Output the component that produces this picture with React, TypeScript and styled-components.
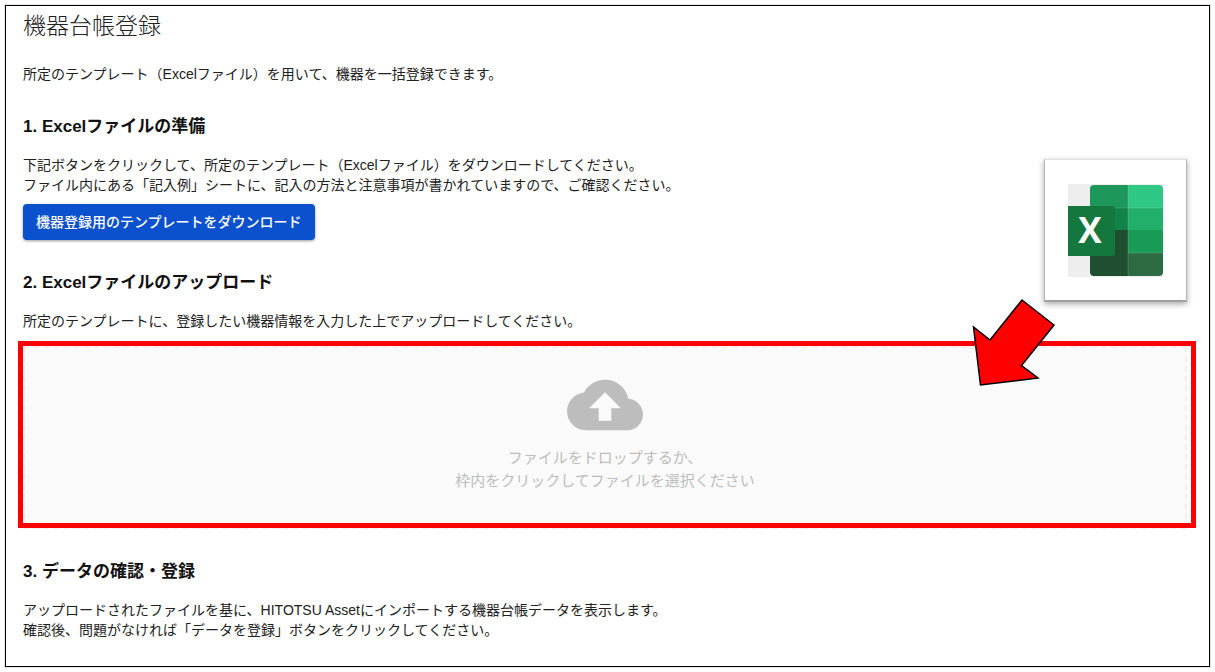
import React from 'react';
import styled, { createGlobalStyle } from 'styled-components';
import { MdCloudUpload } from 'react-icons/md';

const GlobalStyle = createGlobalStyle`
  *, *::before, *::after { box-sizing: border-box; }
  body {
    margin: 0;
    background: #fff;
    color: #212121;
    font-family: "Liberation Sans", "Noto Sans CJK JP", sans-serif;
    font-size: 14px;
    line-height: 20px;
  }
`;

const Page = styled.main`
  position: relative;
  margin: 5px;
  padding: 4px 22px 26px 17px;
  border: 1px solid #000;
  box-shadow: 0 0 0 1px #e4e4e4;
`;

const Title = styled.h1`
  margin: 0 0 26px;
  font-family: "Noto Sans CJK JP", sans-serif;
  font-size: 23px;
  font-weight: 300;
  line-height: 28px;
`;

const Text = styled.p`
  margin: 0;
`;

const Section = styled.section`
  margin-top: 31px;
`;

const SectionTitle = styled.h2`
  margin: 0 0 16px;
  color: #111;
  font-size: 17px;
  font-weight: 700;
  line-height: 24px;
`;

const DownloadButton = styled.button`
  display: block;
  margin-top: 9px;
  padding: 0 13px;
  height: 36px;
  border: 0;
  border-radius: 4px;
  background: #0b51cd;
  box-shadow: 0 1px 3px rgba(0, 0, 0, 0.4);
  color: #fff;
  font-family: inherit;
  font-size: 14px;
  font-weight: 500;
  line-height: 32px;
  cursor: pointer;
`;

const DropArea = styled.div`
  position: relative;
  margin-top: 15px;
`;

const DropZone = styled.label`
  display: flex;
  flex-direction: column;
  align-items: center;
  padding: 19px 16px 35px;
  border: 2px dashed #eee;
  background: #fafafa;
  color: #bdbdbd;
  font-size: 15px;
  line-height: 23px;
  text-align: center;
  cursor: pointer;

  svg {
    display: block;
    margin-bottom: 3px;
  }
`;

const FileInput = styled.input`
  position: absolute;
  width: 1px;
  height: 1px;
  opacity: 0;
`;

const Highlight = styled.div`
  position: absolute;
  inset: -5px -9px 1px -5px;
  border: 5px solid #f00;
  pointer-events: none;
`;

const Arrow = styled.svg`
  position: absolute;
  top: -48px;
  right: 131px;
  pointer-events: none;
`;

const LogoCard = styled.div`
  position: absolute;
  top: 153px;
  right: 22px;
  padding: 22px;
  border: 1px solid #b4b4b4;
  border-top-color: #e2e2e2;
  border-bottom: 2px solid #a0a0a0;
  background: #fff;
  box-shadow: 0 2px 6px rgba(0, 0, 0, 0.35);

  svg {
    display: block;
  }
`;

const ExcelLogo = () => (
  <svg width="97" height="96" viewBox="0 0 97 96" role="img" aria-label="Excel">
    <rect x="1" y="2" width="95" height="93" fill="#eee" />
    <clipPath id="sheet">
      <rect x="23" y="3" width="73" height="91" rx="4" />
    </clipPath>
    <g clipPath="url(#sheet)">
      <rect x="23" y="3" width="38" height="23" fill="#1d975a" />
      <rect x="61" y="3" width="35" height="23" fill="#2fc784" />
      <rect x="23" y="26" width="38" height="22" fill="#128349" />
      <rect x="61" y="26" width="35" height="22" fill="#21af69" />
      <rect x="23" y="48" width="38" height="46" fill="#204e31" />
      <rect x="61" y="48" width="35" height="23" fill="#199b56" />
      <rect x="61" y="71" width="35" height="23" fill="#2c6b44" />
      <path d="M61 3V94M23 26H96M61 71H96" stroke="#fff" strokeOpacity="0.15" />
    </g>
    <path d="M1 24H45a3 3 0 0 1 3 3V71a3 3 0 0 1-3 3H1z" fill="#14783e" />
    <text
      x="23"
      y="61"
      fill="#fff"
      fontFamily="'Open Sans', sans-serif"
      fontSize="35"
      fontWeight="700"
      textAnchor="middle"
    >
      X
    </text>
  </svg>
);

export default function App() {
  return (
    <>
      <GlobalStyle />
      <Page>
        <Title>機器台帳登録</Title>
        <Text>所定のテンプレート（Excelファイル）を用いて、機器を一括登録できます。</Text>

        <Section>
          <SectionTitle>1. Excelファイルの準備</SectionTitle>
          <Text>
            下記ボタンをクリックして、所定のテンプレート（Excelファイル）をダウンロードしてください。
            <br />
            ファイル内にある「記入例」シートに、記入の方法と注意事項が書かれていますので、ご確認ください。
          </Text>
          <DownloadButton type="button">機器登録用のテンプレートをダウンロード</DownloadButton>
        </Section>

        <Section>
          <SectionTitle>2. Excelファイルのアップロード</SectionTitle>
          <Text>所定のテンプレートに、登録したい機器情報を入力した上でアップロードしてください。</Text>
          <DropArea>
            <FileInput id="ledger-file" type="file" accept=".xlsx" />
            <DropZone htmlFor="ledger-file">
              <MdCloudUpload size={76} aria-hidden />
              <span>
                ファイルをドロップするか、
                <br />
                枠内をクリックしてファイルを選択ください
              </span>
            </DropZone>
            <Highlight />
            <Arrow width="84" height="90" viewBox="0 0 84 90" aria-hidden>
              <path
                d="M50 2L82 27L49.500 67.500L66 80L8.500 87L1.500 29L18 42Z"
                fill="#f00"
                stroke="#000"
                strokeWidth="1.500"
              />
            </Arrow>
          </DropArea>
        </Section>

        <Section>
          <SectionTitle>3. データの確認・登録</SectionTitle>
          <Text>
            アップロードされたファイルを基に、HITOTSU Assetにインポートする機器台帳データを表示します。
            <br />
            確認後、問題がなければ「データを登録」ボタンをクリックしてください。
          </Text>
        </Section>

        <LogoCard>
          <ExcelLogo />
        </LogoCard>
      </Page>
    </>
  );
}
